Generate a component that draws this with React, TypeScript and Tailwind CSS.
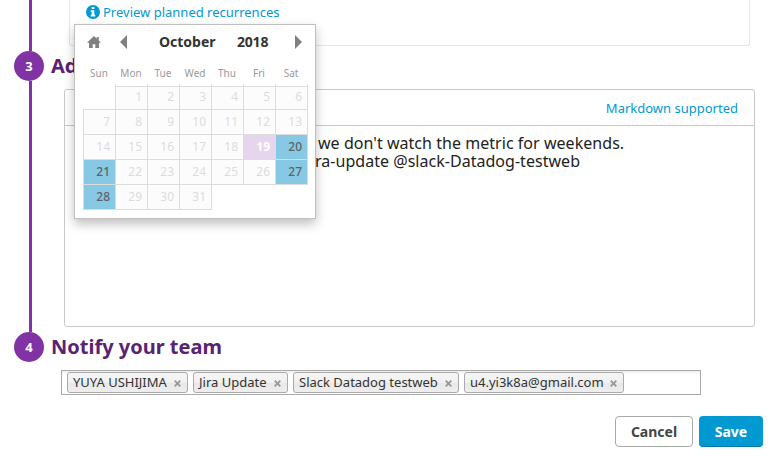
import React from "react";

const DAYS = ["Sun", "Mon", "Tue", "Wed", "Thu", "Fri", "Sat"];
const SELECTED = [20, 21, 27, 28];
const TEAM = [
  { name: "YUYA USHIJIMA", width: "w-[121px]" },
  { name: "Jira Update", width: "w-[95px]" },
  { name: "Slack Datadog testweb", width: "w-[166px]" },
  { name: "u4.yi3k8a@gmail.com", width: "w-[160px]" },
];

function cellStyle(day: number) {
  if (day === 19) return "bg-[#e6d6ed] font-bold text-white";
  if (SELECTED.includes(day)) return "bg-[#87c9e5] font-medium text-[#5f6265]";
  return "bg-[#fcfcfc] text-[#dcdcdc]";
}

function Calendar() {
  const cells = [0, ...Array.from({ length: 31 }, (_, i) => i + 1)];
  return (
    <div className="absolute top-[24px] left-[74px] h-[195px] w-[242px] border border-[#c0c0c0] bg-white shadow-[0_5px_10px_rgba(0,0,0,0.25)]">
      <div className="flex h-[33px] items-center">
        <svg className="mt-px ml-[12px] h-[12px] w-[14px]" viewBox="0 0 14 12" fill="#808080">
          <path d="M7 0 0 6.8h2V12h3.7V8.2h2.6V12H12V6.8h2l-2.2-2.2V1H9.8v1.7z" />
        </svg>
        <svg className="mt-px ml-[19px] h-[14px] w-[7px]" viewBox="0 0 7 14" fill="#808080">
          <path d="M7 0v14L0 7z" />
        </svg>
        <span className="ml-[32px] w-[78px] text-[14px] leading-[20px] font-bold text-[#333]">October</span>
        <span className="w-[57px] text-[14px] leading-[20px] font-bold tracking-[-0.2px] text-[#333]">2018</span>
        <svg className="mt-px ml-px h-[14px] w-[7px]" viewBox="0 0 7 14" fill="#808080">
          <path d="M0 0v14l7-7z" />
        </svg>
      </div>
      <div className="mt-[7px] ml-[8px] grid h-[19px] w-[224px] grid-cols-7 text-center text-[10px] leading-[17px] text-[#999]">
        {DAYS.map((d) => (
          <span key={d}>{d}</span>
        ))}
      </div>
      <div className="ml-[9px] flex h-[2px]">
        {DAYS.map((d) => (
          <span key={d} className="w-[32px] border-r border-[#dcdcdc]" />
        ))}
      </div>
      <div className="ml-[8px] grid w-[225px] grid-cols-[repeat(7,32px)] text-right text-[12px]">
        {cells.map((day) =>
          day === 0 ? (
            <span key={day} />
          ) : (
            <span
              key={day}
              className={`w-[33px] border border-[#dcdcdc] pr-[5px] ${day < 7 ? "h-[24px] leading-[20px]" : "-mt-px h-[26px] leading-[24px]"} ${cellStyle(day)}`}
            >
              {day}
            </span>
          )
        )}
      </div>
    </div>
  );
}

function StepBadge({ n }: { n: number }) {
  return (
    <span className="ml-[14px] flex h-[30px] w-[30px] shrink-0 items-center justify-center rounded-full bg-[#8133a5] pt-px text-[13px] font-bold text-white">
      {n}
    </span>
  );
}

export default function App() {
  return (
    <div className="relative h-[461px] w-[778px] overflow-hidden bg-white font-['Noto_Sans','Open_Sans',sans-serif]">
      <div className="flex">
        <div className="flex w-[51px] shrink-0 flex-col">
          <span className="ml-[29px] h-[51px] w-[3px] bg-[#8133a5]" />
          <StepBadge n={3} />
          <span className="ml-[29px] h-[251px] w-[3px] bg-[#8133a5]" />
          <StepBadge n={4} />
        </div>
        <div className="flex-1">
          <div className="ml-[18px] flex h-[46px] w-[681px] rounded-b-[3px] border border-t-0 border-[#e6e6e6] pl-[16px]">
            <a className="flex h-[25px] items-center text-[13px] text-[#0099d2]">
              <svg className="mr-[3px] mb-[2px] h-[14px] w-[14px]" viewBox="0 0 14 14">
                <circle cx="7" cy="7" r="7" fill="#0099d2" />
                <path d="M5.7 2h2.6v2H5.7zM4.7 5.2h3.6v4.5h1v1.7H4.7V9.7h1V6.9h-1z" fill="white" />
              </svg>
              Preview planned recurrences
            </a>
          </div>
          <h2 className="flex h-[43px] items-center pb-[4px] text-[20px] font-bold text-[#5a2273]">Ad</h2>
          <div className="ml-[13px] h-[238px] w-[691px] rounded-[3px] border border-[#c9c9c9]">
            <div className="flex h-[36px] items-center justify-end border-b border-[#c9c9c9] pt-[2px] pr-[16px] text-[13px] text-[#0099d2]">
              Markdown supported
            </div>
            <div className="pt-[8px] pl-[253px] text-[16px] leading-[18px] text-[#222]">
              <p className="tracking-[0.04px]">we don't watch the metric for weekends.</p>
              <p className="-ml-[3px] tracking-[0.03px]">ra-update @slack-Datadog-testweb</p>
            </div>
          </div>
          <h2 className="flex h-[43px] items-center pb-[4px] text-[20px] font-bold text-[#5a2273]">Notify your team</h2>
          <div className="ml-[10px] flex h-[25px] w-[640px] gap-[5px] border border-[#aaa] bg-[linear-gradient(#eee_1%,#fff_15%)] pt-px pl-[5px]">
            {TEAM.map((t) => (
              <span
                key={t.name}
                className={`flex h-[21px] items-center justify-between rounded-[3px] border border-[#aaa] bg-[linear-gradient(#f4f4f4_20%,#f0f0f0_50%,#e8e8e8_52%,#eee)] pr-[6px] pl-[5px] text-[13px] leading-[19px] whitespace-nowrap text-[#333] ${t.width}`}
              >
                {t.name}
                <svg className="mt-[2px] h-[7px] w-[7px]" viewBox="0 0 7 7" stroke="#999" strokeWidth="1.9">
                  <path d="m.7.7 5.6 5.6M6.3.7.7 6.3" />
                </svg>
              </span>
            ))}
          </div>
          <div className="mt-[21px] mr-[15px] flex justify-end gap-[6px] text-[14px] font-bold">
            <button className="h-[31px] w-[78px] rounded-[4px] border border-[#aaa] bg-white text-[#444]">Cancel</button>
            <button className="h-[31px] w-[64px] rounded-[4px] border-b border-[#007ba8] bg-[#0099d2] text-white">Save</button>
          </div>
        </div>
      </div>
      <Calendar />
    </div>
  );
}
